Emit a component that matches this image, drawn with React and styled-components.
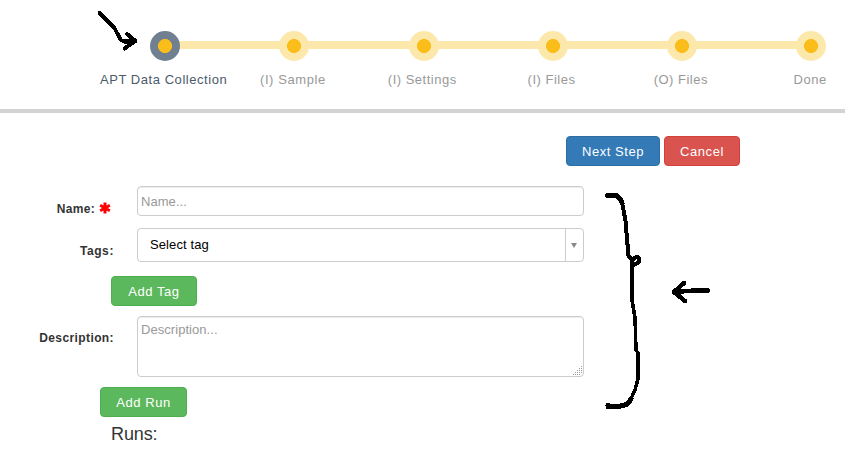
import React from "react";
import styled, { createGlobalStyle } from "styled-components";

const GlobalStyle = createGlobalStyle`
  * { box-sizing: border-box; }
  body {
    margin: 0;
    background: #fff;
    color: #333;
    font-family: "Liberation Sans", Arial, sans-serif;
    font-size: 13px;
    line-height: 18px;
    overflow: hidden;
  }
`;

const Page = styled.div`
  position: relative;
  width: 845px;
  height: 450px;
  overflow: hidden;
`;

const Wizard = styled.header`
  height: 113px;
  padding-top: 31px;
  border-bottom: 4px solid #d3d3d3;
`;

const Track = styled.div`
  display: flex;
  align-items: center;
  width: 676px;
  margin-left: 150.2px;
`;

const Dot = styled.span`
  position: relative;
  z-index: 1;
  flex: none;
  width: 30px;
  height: 30px;
  border-radius: 50%;
  background: radial-gradient(circle, #fbbd19 6.7px, ${(p) => (p.$active ? "#708090" : "#fde8ab")} 7.3px);
`;

const Line = styled.span`
  flex: 1;
  height: 8px;
  margin: 0 -3px 2px;
  background: #fde8ab;
`;

const StepLabels = styled.div`
  display: grid;
  grid-template-columns: repeat(6, 129.3px);
  margin: 10px 0 0 99px;
`;

const StepLabel = styled.span`
  text-align: center;
  white-space: nowrap;
  letter-spacing: ${(p) => p.$spacing}px;
  color: ${(p) => (p.$active ? "#4b5a6b" : "#999")};
`;

const Actions = styled.div`
  display: flex;
  justify-content: flex-end;
  gap: 4px;
  width: 740px;
  margin-top: 23px;
`;

const tones = {
  primary: ["#337ab7", "#2e6da4"],
  danger: ["#d9534f", "#d43f3a"],
  success: ["#5cb85c", "#4cae4c"],
};

const Button = styled.button`
  display: block;
  flex: none;
  width: ${(p) => p.$width}px;
  height: 30px;
  padding: 1px 0 0;
  border: 1px solid ${(p) => tones[p.$tone][1]};
  border-radius: 4px;
  background: ${(p) => tones[p.$tone][0]};
  color: #fff;
  font: 13px/27px "Liberation Sans", Arial, sans-serif;
  letter-spacing: 0.55px;
  white-space: nowrap;
`;

const Form = styled.form`
  display: flex;
  flex-direction: column;
  align-items: flex-start;
  padding-top: 20px;
`;

const Row = styled.div`
  display: flex;
  align-items: flex-start;
  height: ${(p) => p.$height}px;
  margin-bottom: ${(p) => p.$gap}px;
`;

const Label = styled.label`
  display: flex;
  justify-content: flex-end;
  width: 114px;
  margin-right: 23px;
  padding: ${(p) => p.$top}px ${(p) => p.$right || 0}px 0 0;
  font-size: 12px;
  font-weight: bold;
  letter-spacing: ${(p) => p.$spacing}px;
  color: #333;
`;

const Required = styled.svg`
  width: 12px;
  height: 12px;
  margin: 2px 0 0 4px;
  stroke: #f00;
  stroke-width: 3;
`;

const Input = styled.input`
  width: 447px;
  height: 30px;
  padding: 0 3px;
  border: 1px solid #ccc;
  border-radius: 4px;
  box-shadow: inset 0 1px 1px rgba(0, 0, 0, 0.075);
  font: 13px "Liberation Sans", Arial, sans-serif;
  letter-spacing: 0.05px;
  &::placeholder { color: #999; opacity: 1; }
`;

const TextArea = styled.div`
  display: flex;
  justify-content: space-between;
  width: 447px;
  height: 61px;
  padding: 4px 0 0 3px;
  border: 1px solid #ccc;
  border-radius: 4px;
  box-shadow: inset 0 1px 1px rgba(0, 0, 0, 0.075);
  color: #999;
  letter-spacing: 0.05px;
`;

const Grip = styled.svg`
  align-self: flex-end;
  width: 10px;
  height: 10px;
  fill: #999;
`;

const Select = styled.div`
  display: flex;
  width: 447px;
  height: 34px;
  border: 1px solid #ccc;
  border-radius: 4px;
  color: #000;
  line-height: 32px;
`;

const SelectValue = styled.span`
  flex: 1;
  padding-left: 12px;
  font-size: 13px;
  letter-spacing: 0.1px;
`;

const SelectArrow = styled.span`
  display: grid;
  place-items: center;
  width: 18px;
  border-left: 1px solid #ccc;
`;

const Triangle = styled.svg`
  width: 6px;
  height: 5px;
  margin-right: 1px;
  fill: #888;
`;

const Indent = styled.div`
  margin: 0 0 10px ${(p) => p.$left}px;
`;

const Heading = styled.h4`
  margin: -4px 0 0 111px;
  font-size: 18px;
  font-weight: normal;
  line-height: 22px;
  letter-spacing: -0.1px;
`;

const Ink = styled.svg`
  position: absolute;
  inset: 0;
  z-index: 2;
  fill: none;
  stroke: #000;
  stroke-linecap: round;
  stroke-linejoin: round;
  pointer-events: none;
`;

const steps = [
  ["APT Data Collection", 0.55],
  ["(I) Sample", 0.6],
  ["(I) Settings", 0.5],
  ["(I) Files", 0.5],
  ["(O) Files", 0.5],
  ["Done", 0.55],
];

const gripDots = [[8, 0], [6, 2], [8, 2], [4, 4], [6, 4], [8, 4], [2, 6], [4, 6], [6, 6], [8, 6], [0, 8], [2, 8], [4, 8], [6, 8]];

export default function App() {
  return (
    <Page>
      <GlobalStyle />
      <Wizard>
        <Track>
          {steps.map(([name], i) => (
            <React.Fragment key={name}>
              {i > 0 && <Line />}
              <Dot $active={i === 0} />
            </React.Fragment>
          ))}
        </Track>
        <StepLabels>
          {steps.map(([name, spacing], i) => (
            <StepLabel key={name} $active={i === 0} $spacing={spacing}>{name}</StepLabel>
          ))}
        </StepLabels>
      </Wizard>
      <Actions>
        <Button $tone="primary" $width={94}>Next Step</Button>
        <Button $tone="danger" $width={76}>Cancel</Button>
      </Actions>
      <Form>
        <Row $height={30} $gap={12}>
          <Label $top={14} $right={3} $spacing={0.3}>
            Name:
            <Required viewBox="0 0 12 12">
              <path d="M6 .5v11M1.2 3.2l9.6 5.6M1.2 8.8l9.6-5.6" />
            </Required>
          </Label>
          <Input placeholder="Name..." />
        </Row>
        <Row $height={34} $gap={14}>
          <Label $top={14} $spacing={0.6}>Tags:</Label>
          <Select>
            <SelectValue>Select tag</SelectValue>
            <SelectArrow>
              <Triangle viewBox="0 0 6 5"><path d="M0 0h6L3 5z" /></Triangle>
            </SelectArrow>
          </Select>
        </Row>
        <Indent $left={111}>
          <Button type="button" $tone="success" $width={86}>Add Tag</Button>
        </Indent>
        <Row $height={61} $gap={10}>
          <Label $top={13} $spacing={0.4}>Description:</Label>
          <TextArea>
            Description...
            <Grip>
              {gripDots.map(([x, y]) => (
                <rect key={`${x}-${y}`} x={x} y={y} width="1" height="1" />
              ))}
            </Grip>
          </TextArea>
        </Row>
        <Indent $left={100}>
          <Button type="button" $tone="success" $width={87}>Add Run</Button>
        </Indent>
        <Heading>Runs:</Heading>
      </Form>
      <Ink width="845" height="450" shapeRendering="crispEdges">
        <path strokeWidth="4" d="M99.500 13L114.500 28L117 33L121 40L125 42L135 41M127 34L135.500 41L124.500 48.500M124 41H134" />
        <path strokeWidth="5" d="M607.500 195.500H616Q620 197 622 203" />
        <path strokeWidth="4" d="M622 202L625.500 221L628.500 256L632 260L637 256.500L639 258V262L634 265L632 261" />
        <path strokeWidth="3.500" d="M632 261V300L635 318L636 350L638 353V379L635 390Q630 402 626 405" />
        <path strokeWidth="5" d="M631 399Q628 404 625 405L618 406.500L608 407V405.500" />
        <path strokeWidth="4.500" d="M708 290.500H695L674 292M684 283L674 292L685 301" />
      </Ink>
    </Page>
  );
}
